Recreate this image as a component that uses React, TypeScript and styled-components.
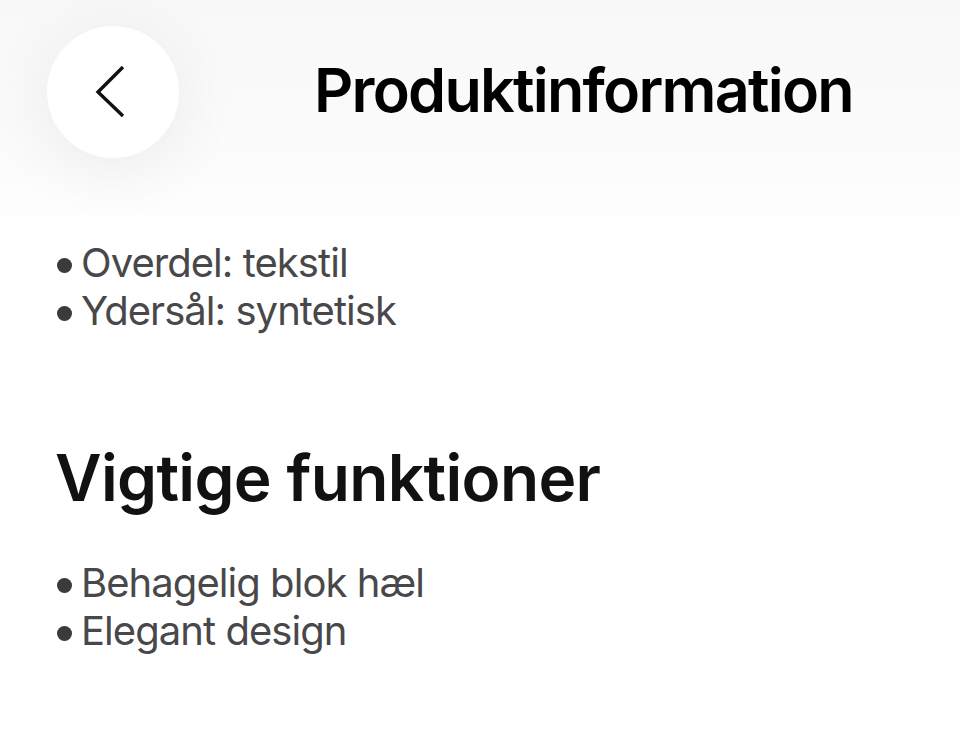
import React from "react";
import styled, { createGlobalStyle } from "styled-components";

const Global = createGlobalStyle`
  html, body { margin: 0; padding: 0; background: #ffffff; }
  body { font-family: Inter, "Noto Sans", "Liberation Sans", sans-serif; -webkit-font-smoothing: antialiased; }
  * { box-sizing: border-box; }
`;

const Page = styled.div`
  width: 960px;
  height: 747px;
  overflow: hidden;
  background: linear-gradient(180deg, #f8f8f8 0px, #fbfbfb 150px, #ffffff 240px);
`;

const Header = styled.header`
  display: flex;
  align-items: center;
  gap: 135px;
  padding: 26px 0 0 47px;
`;

const BackButton = styled.button`
  width: 132px;
  height: 132px;
  flex: none;
  border: none;
  border-radius: 50%;
  background: #ffffff;
  box-shadow: 0 10px 70px rgba(0, 0, 0, 0.07);
  display: flex;
  align-items: center;
  justify-content: center;
  padding: 0;
`;

const Title = styled.h1`
  margin: 0 0 4px;
  font-size: 61px;
  font-weight: 600;
  color: #000;
  letter-spacing: -1.75px;
`;

const Content = styled.main`
  padding: 81px 0 0 57px;
`;

const List = styled.ul<{ $top?: number }>`
  list-style: none;
  margin: ${(p) => p.$top ?? 0}px 0 0;
  padding: 0;
`;

const Item = styled.li`
  display: flex;
  align-items: center;
  gap: 9px;
  font-size: 40px;
  line-height: 48px;
  color: #48484a;
  letter-spacing: -0.95px;
`;

const Dot = styled.span`
  width: 15px;
  height: 15px;
  border-radius: 50%;
  background: #3a3a3c;
  flex: none;
  margin-top: 4px;
`;

const Heading = styled.h2`
  margin: 103px 0 0 -2px;
  font-size: 64px;
  line-height: 79px;
  font-weight: 600;
  color: #111;
  letter-spacing: -0.65px;
`;

export default function App() {
  return (
    <Page>
      <Global />
      <Header>
        <BackButton aria-label="Tilbage">
          <svg width="132" height="132" viewBox="0 0 132 132">
            <path d="M76 41 L51 66 L76 90" fill="none" stroke="#111" strokeWidth="3.4" strokeLinecap="butt" strokeLinejoin="miter" />
          </svg>
        </BackButton>
        <Title>Produktinformation</Title>
      </Header>
      <Content>
        <List>
          <Item><Dot />Overdel: tekstil</Item>
          <Item><Dot />Ydersål: syntetisk</Item>
        </List>
        <Heading>Vigtige funktioner</Heading>
        <List $top={42}>
          <Item><Dot />Behagelig blok hæl</Item>
          <Item><Dot />Elegant design</Item>
        </List>
      </Content>
    </Page>
  );
}
